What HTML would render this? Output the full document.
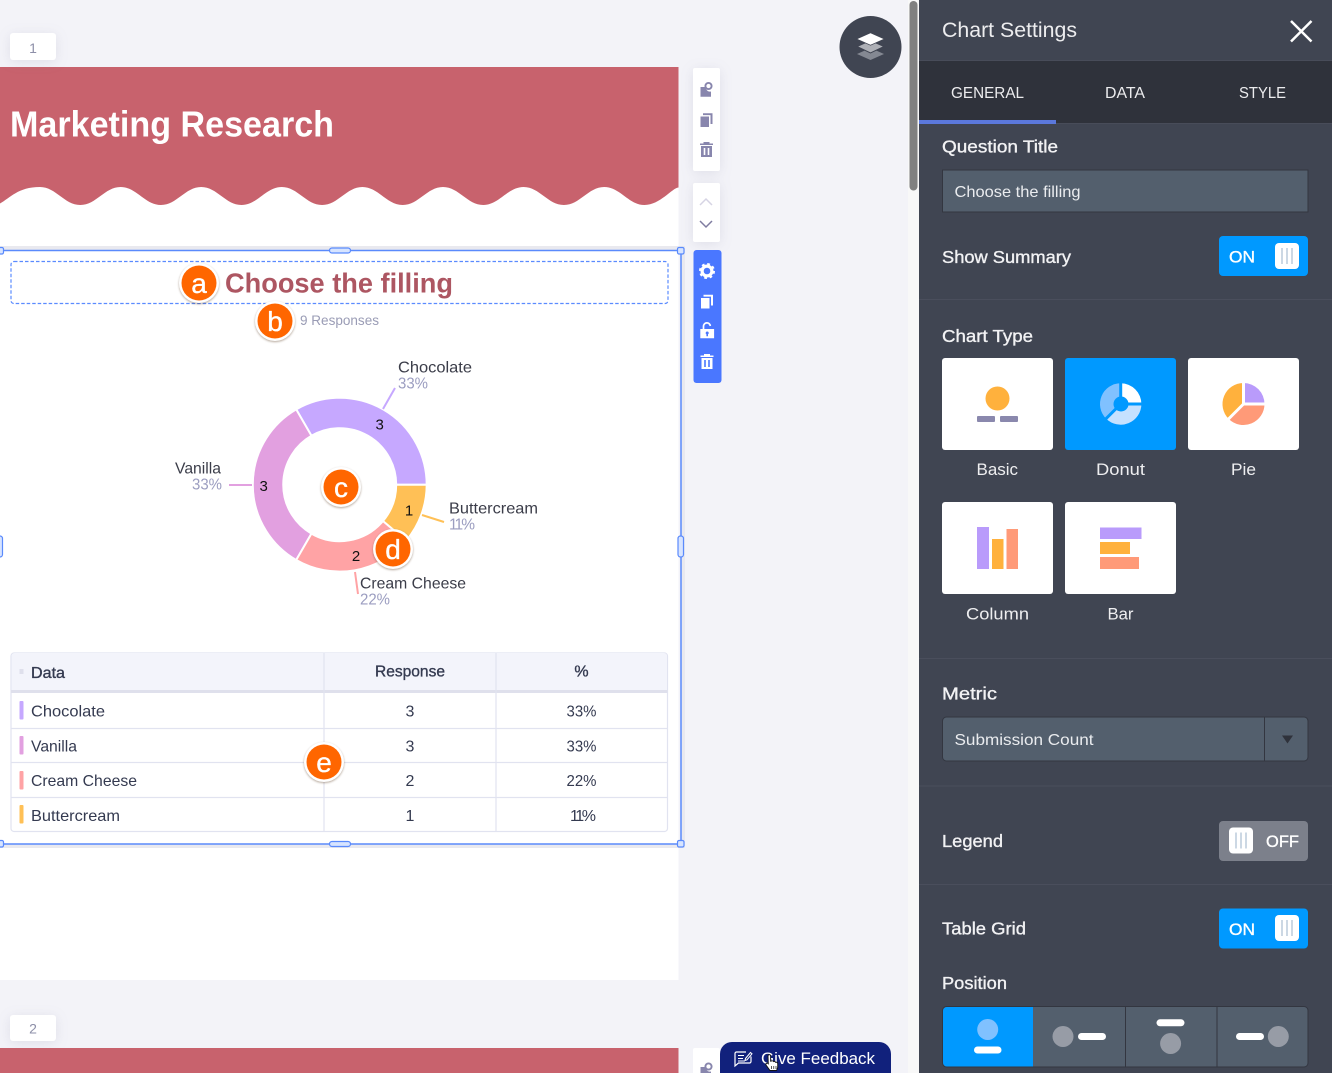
<!DOCTYPE html>
<html><head><meta charset="utf-8"><title>Chart Settings</title>
<style>
html,body{margin:0;padding:0;width:1332px;height:1073px;overflow:hidden;background:#f3f3f8}
svg{display:block;font-family:"Liberation Sans",sans-serif}
.m{stroke:currentColor;stroke-width:.35px}
.sh{filter:drop-shadow(0 2px 6px rgba(90,90,130,.13))}
.bd{filter:drop-shadow(0 1px 1px rgba(90,60,30,.45))}
</style></head><body>
<svg width="1332" height="1073" viewBox="0 0 1332 1073" xmlns="http://www.w3.org/2000/svg">
<defs>
<g id="trash"><path fill-rule="evenodd" d="M-3-7.5h6v1.5h3.5v1.5h-13v-1.5h3.5z M-5.5-3.5h11v11h-11z M-2.8-1.5v7h1.6v-7z M1.2-1.5v7h1.6v-7z"/></g>
<g id="copy"><path d="M-6-3.5h8.5v10.5h-8.5z"/><path d="M-3.5-6.7h9.5v10.7h-2v-8.9h-7.5z"/></g>
<g id="knob"><rect x="-12" y="-13" width="24" height="26" rx="4" fill="#fff"/><path d="M-5-8v16M0-8v16M5-8v16" stroke="#bccbdb" stroke-width="1.5"/></g>
</defs>
<rect width="1332" height="1073" fill="#f3f3f8"/>

<!-- page 1 -->
<rect x="0" y="67" width="678.5" height="913" fill="#fff"/>
<path fill="#c8626d" d="M0 67H678.5V187.5L678.5 187.5C672 188 660 205 644.5 205c-16 0-24.300-18-40.300-18s-24.300 18-40.300 18-24.300-18-40.300-18-24.300 18-40.300 18-24.300-18-40.300-18-24.300 18-40.300 18-24.300-18-40.300-18-24.300 18-40.300 18-24.300-18-40.300-18-24.300 18-40.300 18-24.300-18-40.300-18-24.300 18-40.300 18-24.300-18-40.300-18-24.300 18-40.300 18-24.300-18-40.300-18C18 187 10 198 0 203.500z"/>
<g class="sh"><rect x="10" y="33" width="46" height="27" rx="3" fill="#fff"/></g>
<text x="33" y="53" font-size="14" fill="#8d8fa8" text-anchor="middle">1</text>
<text x="10" y="136.500" font-size="36" font-weight="700" fill="#fff" textLength="324" lengthAdjust="spacingAndGlyphs">Marketing Research</text>

<!-- selection -->
<path d="M0 248h683v598H0" fill="none" stroke="#e9e9ef" stroke-width="4"/>
<path d="M0 250.500H681V844H0" fill="none" stroke="#5a8afc" stroke-width="1.500"/>
<g fill="#d7e4ff" stroke="#5a8afc" stroke-width="1.200">
<rect x="329.500" y="248" width="21" height="5" rx="2.500"/>
<rect x="329.500" y="841.500" width="21" height="5" rx="2.500"/>
<rect x="678" y="536" width="5.500" height="21" rx="2.500"/>
<rect x="-3" y="536" width="5.500" height="21" rx="2.500"/>
<rect x="677.500" y="247.500" width="6.500" height="6.500" rx="1.500"/>
<rect x="677.500" y="840.500" width="6.500" height="6.500" rx="1.500"/>
<rect x="-3" y="247.500" width="6.500" height="6.500" rx="1.500"/>
<rect x="-3" y="840.500" width="6.500" height="6.500" rx="1.500"/>
</g>
<rect x="11" y="261.500" width="657" height="42" rx="3" fill="none" stroke="#5b8bff" stroke-width="1.200" stroke-dasharray="3.500 2"/>
<text x="225" y="292.500" font-size="28" font-weight="700" fill="#ad5662" textLength="228" lengthAdjust="spacingAndGlyphs">Choose the filling</text>
<text x="300" y="325" font-size="14" fill="#9a9cb5" textLength="79" lengthAdjust="spacingAndGlyphs">9 Responses</text>

<!-- donut -->
<g stroke="#fff" stroke-width="2">
<path fill="#c6a8ff" d="M426.700 484.700A87 87 0 0 0 296.200 409.400L311.450 435.800A56.500 56.500 0 0 1 396.200 484.700Z"/>
<path fill="#e2a0e0" d="M296.200 409.400A87 87 0 0 0 296.200 560L311.450 533.600A56.500 56.500 0 0 1 311.450 435.800Z"/>
<path fill="#ffa3a5" d="M296.200 560A87 87 0 0 0 406.300 540.600L383 521A56.500 56.500 0 0 1 311.450 533.600Z"/>
<path fill="#ffc056" d="M406.300 540.600A87 87 0 0 0 426.700 484.700L396.200 484.700A56.500 56.500 0 0 1 383 521Z"/>
</g>
<g stroke-width="2" fill="none">
<path d="M383 409L395 388" stroke="#c6a8ff"/>
<path d="M229 485H252" stroke="#e2a0e0"/>
<path d="M422 515L444 522" stroke="#ffc056"/>
<path d="M355 572L358 594" stroke="#ffa3a5"/>
</g>
<g font-size="15" fill="#111" text-anchor="middle">
<text x="379.700" y="429.500">3</text><text x="263.700" y="491">3</text><text x="409" y="515.500">1</text><text x="356" y="561">2</text>
</g>
<g font-size="16" fill="#3b3d49">
<text x="398" y="372.500" textLength="74" lengthAdjust="spacingAndGlyphs">Chocolate</text>
<text x="175" y="473.500" textLength="46" lengthAdjust="spacingAndGlyphs">Vanilla</text>
<text x="449" y="513.500" textLength="89" lengthAdjust="spacingAndGlyphs">Buttercream</text>
<text x="360" y="588.500" textLength="106" lengthAdjust="spacingAndGlyphs">Cream Cheese</text>
</g>
<g font-size="15.500" fill="#9b9dc0">
<text x="398" y="388.500" textLength="30" lengthAdjust="spacingAndGlyphs">33%</text>
<text x="192" y="489.500" textLength="30" lengthAdjust="spacingAndGlyphs">33%</text>
<text x="449" y="529.500" textLength="24" lengthAdjust="spacing" letter-spacing="-2">11%</text>
<text x="360" y="604.500" textLength="30" lengthAdjust="spacingAndGlyphs">22%</text>
</g>

<!-- table -->
<rect x="11" y="653" width="656.500" height="178.500" rx="3" fill="#fff" stroke="#e1e3f0" stroke-width="1.200"/>
<path d="M11.500 690V656a3 3 0 0 1 3-3H664a3 3 0 0 1 3 3V690Z" fill="#f3f4fb"/>
<rect x="11" y="690" width="656.500" height="3" fill="#dfe0ec"/>
<path d="M11 728.500H667M11 762.500H667M11 797.500H667M324 653V831M496 653V831" stroke="#e1e3f0" stroke-width="1.200" fill="none"/>
<rect x="19.500" y="669" width="4" height="5" fill="#dfe0ec"/>
<rect x="19.500" y="701" width="4" height="18.500" rx="1" fill="#c6a8ff"/>
<rect x="19.500" y="736" width="4" height="18.500" rx="1" fill="#e2a0e0"/>
<rect x="19.500" y="771" width="4" height="18.500" rx="1" fill="#ffa3a5"/>
<rect x="19.500" y="805" width="4" height="18.500" rx="1" fill="#ffc056"/>
<g font-size="16" fill="#343a50" color="#343a50">
<text class="m" x="31" y="678" textLength="34" lengthAdjust="spacingAndGlyphs">Data</text>
<text class="m" x="375" y="676.500" textLength="70" lengthAdjust="spacingAndGlyphs">Response</text>
<text class="m" x="581.500" y="676.500" text-anchor="middle">%</text>
<text x="31" y="716.500" textLength="74" lengthAdjust="spacingAndGlyphs">Chocolate</text>
<text x="31" y="751.500" textLength="46" lengthAdjust="spacingAndGlyphs">Vanilla</text>
<text x="31" y="786" textLength="106" lengthAdjust="spacingAndGlyphs">Cream Cheese</text>
<text x="31" y="821" textLength="89" lengthAdjust="spacingAndGlyphs">Buttercream</text>
<text x="410" y="716.500" text-anchor="middle">3</text>
<text x="410" y="751.500" text-anchor="middle">3</text>
<text x="410" y="786" text-anchor="middle">2</text>
<text x="410" y="821" text-anchor="middle">1</text>
<text x="566.500" y="716.500" textLength="30" lengthAdjust="spacingAndGlyphs">33%</text>
<text x="566.500" y="751.500" textLength="30" lengthAdjust="spacingAndGlyphs">33%</text>
<text x="566.500" y="786" textLength="30" lengthAdjust="spacingAndGlyphs">22%</text>
<text x="570" y="821" textLength="24" lengthAdjust="spacing" letter-spacing="-2">11%</text>
</g>

<!-- badges -->
<g class="bd"><circle cx="199" cy="283" r="20" fill="#fff"/><circle cx="199" cy="283" r="17.500" fill="#ff6600"/></g>
<g class="bd"><circle cx="275" cy="321" r="20" fill="#fff"/><circle cx="275" cy="321" r="17.500" fill="#ff6600"/></g>
<g class="bd"><circle cx="341" cy="487" r="20" fill="#fff"/><circle cx="341" cy="487" r="17.500" fill="#ff6600"/></g>
<g class="bd"><circle cx="393" cy="549" r="20" fill="#fff"/><circle cx="393" cy="549" r="17.500" fill="#ff6600"/></g>
<g class="bd"><circle cx="324" cy="762" r="20" fill="#fff"/><circle cx="324" cy="762" r="17.500" fill="#ff6600"/></g>
<g font-size="28" fill="#fff" text-anchor="middle" class="m" color="#fff">
<text x="199" y="293">a</text><text x="275" y="331">b</text><text x="341" y="497">c</text><text x="393" y="559">d</text><text x="324" y="772">e</text>
</g>

<!-- toolbars -->
<g class="sh"><rect x="693" y="68" width="27" height="103" rx="2" fill="#fff"/>
<rect x="693" y="183" width="27" height="59" rx="2" fill="#fff"/></g>
<g fill="#8886ad" color="#8886ad">
<path d="M700.500 87h5.500v1.500a4 4 0 0 0 5 3v5.200h-10.500z"/>
<circle cx="708.500" cy="86" r="3.100" fill="none" stroke="#8886ad" stroke-width="1.900"/>
<use href="#copy" x="706.500" y="120"/>
<use href="#trash" x="706.500" y="149.500"/>
</g>
<path d="M700 205l6-6 6 6" fill="none" stroke="#d6d4e4" stroke-width="1.500"/>
<path d="M700 221l6 6 6-6" fill="none" stroke="#7f7ca0" stroke-width="1.500"/>
<rect x="693.500" y="250" width="28" height="133" rx="3" fill="#4a77ff"/>
<g fill="#fff">
<circle cx="707" cy="271" r="4.900" fill="none" stroke="#fff" stroke-width="3.200"/>
<circle cx="707" cy="271" r="7" fill="none" stroke="#fff" stroke-width="2" stroke-dasharray="2.750 2.750"/>
<use href="#copy" x="707" y="301.500"/>
<path fill-rule="evenodd" d="M700.300 329h13.800v9.300h-13.800z M707.200 331.500a1.500 1.500 0 0 0-.8 2.800v2h1.600v-2a1.500 1.500 0 0 0-.8-2.800z"/>
<path d="M703.500 329v-2.500a3.400 3.400 0 0 1 6.800-.5" fill="none" stroke="#fff" stroke-width="1.700"/>
<use href="#trash" x="707" y="361.500"/>
</g>

<!-- layers button -->
<circle cx="870.500" cy="47" r="31" fill="#404552"/>
<path d="M857 54l13.500-6 13.500 6-13.500 6z" fill="#848892"/>
<path d="M857 46.500l13.500-6 13.500 6-13.500 6.500z" fill="#aeb0b6" stroke="#404552" stroke-width="1"/>
<path d="M856.500 39l14-6.200 14 6.200-14 6.200z" fill="#fff" stroke="#404552" stroke-width=".8"/>

<!-- page 2 -->
<g class="sh"><rect x="10" y="1015" width="46" height="26" rx="3" fill="#fff"/></g>
<text x="33" y="1033.500" font-size="14" fill="#8d8fa8" text-anchor="middle">2</text>
<rect x="0" y="1048" width="678.500" height="25" fill="#c8626d"/>
<rect x="693" y="1048" width="27" height="30" rx="2" fill="#fff"/>
<path d="M700.500 1067h5.500v1.500a4 4 0 0 0 5 3v5h-10.500z" fill="#8886ad"/>
<circle cx="708.500" cy="1066.500" r="3.100" fill="none" stroke="#8886ad" stroke-width="1.900"/>

<!-- feedback -->
<path d="M720 1073v-19a12 12 0 0 1 12-12h147a12 12 0 0 1 12 12v19z" fill="#11217c"/>
<path d="M746 1052h-9.500a1.500 1.500 0 0 0-1.500 1.500v12.500l3.500-3h11a1.500 1.500 0 0 0 1.500-1.500v-5" fill="none" stroke="#fff" stroke-width="1.200"/>
<path d="M738 1055.500h6M738 1058.500h5M738 1061h7M745.500 1058.500l5-6 1.500 1.300-5 6-2 .7z" fill="none" stroke="#fff" stroke-width="1"/>
<text x="761" y="1064" font-size="17" fill="#fff" textLength="114" lengthAdjust="spacingAndGlyphs">Give Feedback</text>
<path d="M768 1056c0-1.700 2.600-1.700 2.600 0v5.200l1.200-.3c.9-.2 1.700.2 1.800.7.900-.3 1.700 0 1.900.7 1.100-.3 2.200.2 2.200 1.300v3.700l-1.100 3.200h-6.600l-3.900-5.400c-.9-1.400.9-2.700 2.200-1.400z" fill="#fff" stroke="#111" stroke-width=".9"/>
<path d="M771.500 1066v3M773.800 1066v3M776 1066v3" stroke="#111" stroke-width=".7"/>

<!-- scrollbar -->
<rect x="908" y="0" width="11" height="1073" fill="#f8f8f8"/>
<rect x="909.500" y="1" width="8" height="189.500" rx="4" fill="#808080"/>

<!-- panel -->
<rect x="919" y="0" width="413" height="1073" fill="#404552"/>
<rect x="919" y="60" width="413" height="1" fill="#484c59"/>
<rect x="919" y="61" width="413" height="62" fill="#2f323b"/>
<rect x="919" y="123" width="413" height="1" fill="#484c59"/>
<rect x="919" y="120" width="137" height="4" fill="#5b78dc"/>
<text x="942" y="37" font-size="21" fill="#ededef" textLength="135" lengthAdjust="spacingAndGlyphs">Chart Settings</text>
<path d="M1291 21l20.500 20.500M1311.500 21l-20.500 20.500" stroke="#fff" stroke-width="2.500" fill="none"/>
<g font-size="16" fill="#ececee">
<text x="951" y="98" textLength="73" lengthAdjust="spacingAndGlyphs">GENERAL</text>
<text x="1105" y="98" textLength="40" lengthAdjust="spacingAndGlyphs">DATA</text>
<text x="1239" y="98" textLength="47" lengthAdjust="spacingAndGlyphs">STYLE</text>
</g>
<g font-size="17.500" fill="#f2f2f4" color="#f2f2f4">
<text class="m" x="942" y="152.500" textLength="116" lengthAdjust="spacingAndGlyphs">Question Title</text>
<text class="m" x="942" y="263" textLength="129" lengthAdjust="spacingAndGlyphs">Show Summary</text>
<text class="m" x="942" y="342" textLength="91" lengthAdjust="spacingAndGlyphs">Chart Type</text>
<text class="m" x="942" y="699.500" textLength="55" lengthAdjust="spacingAndGlyphs">Metric</text>
<text class="m" x="942" y="847" textLength="61" lengthAdjust="spacingAndGlyphs">Legend</text>
<text class="m" x="942" y="934.500" textLength="84" lengthAdjust="spacingAndGlyphs">Table Grid</text>
<text class="m" x="942" y="989" textLength="65" lengthAdjust="spacingAndGlyphs">Position</text>
</g>
<rect x="942.500" y="170" width="365.500" height="42" fill="#535f6d" stroke="#333640"/>
<text x="954.500" y="197" font-size="16" fill="#eaecef" textLength="126" lengthAdjust="spacingAndGlyphs">Choose the filling</text>

<rect x="1219" y="236" width="89" height="40" rx="4" fill="#0099ff"/>
<text class="m" x="1229" y="262.500" font-size="17" fill="#fff" color="#fff" textLength="26" lengthAdjust="spacingAndGlyphs">ON</text>
<use href="#knob" x="1287" y="256"/>
<path d="M919 299.500H1332M919 658.500H1332M919 786H1332M919 884.500H1332" stroke="#4a4e5c" stroke-width="1"/>

<!-- chart type cards -->
<rect x="942" y="358" width="111" height="92" rx="3" fill="#fff"/>
<rect x="1065" y="358" width="111" height="92" rx="3" fill="#0099ff"/>
<rect x="1188" y="358" width="111" height="92" rx="3" fill="#fff"/>
<rect x="942" y="502" width="111" height="92" rx="3" fill="#fff"/>
<rect x="1065" y="502" width="111" height="92" rx="3" fill="#fff"/>

<circle cx="997.500" cy="398.500" r="12" fill="#ffb13d"/>
<rect x="977" y="416" width="18" height="6" rx="1" fill="#8a88ad"/>
<rect x="1000" y="416" width="18" height="6" rx="1" fill="#8a88ad"/>

<path d="M1120.700 404V383.300A20.700 20.700 0 0 1 1141.400 404Z" fill="#fff"/>
<path d="M1120.700 404H1141.400A20.700 20.700 0 0 1 1106.060 418.640Z" fill="#c5e1ff"/>
<path d="M1120.700 404L1106.060 418.640A20.700 20.700 0 0 1 1120.700 383.300Z" fill="#80c1ff"/>
<path d="M1120.700 404V380M1120.700 404H1144M1120.700 404L1104 420.700" stroke="#0099ff" stroke-width="3" fill="none"/>
<circle cx="1121" cy="404" r="7.500" fill="#0099ff"/>

<path d="M1243.500 404V383A21 21 0 0 1 1264.500 404Z" fill="#b99bfb"/>
<path d="M1243.500 404H1264.500A21 21 0 0 1 1228.650 418.850Z" fill="#ff9a78"/>
<path d="M1243.500 404L1228.650 418.850A21 21 0 0 1 1243.500 383Z" fill="#ffb13d"/>
<path d="M1243.500 404V380M1243.500 404H1267M1243.500 404L1226 421.500" stroke="#fff" stroke-width="3" fill="none"/>

<rect x="977" y="527" width="12" height="42" fill="#b99bfb"/>
<rect x="992" y="539" width="11.500" height="30" fill="#ffb13d"/>
<rect x="1006.500" y="529" width="11.500" height="40" fill="#ff9a78"/>
<rect x="1100" y="527.500" width="41.500" height="11.500" fill="#b99bfb"/>
<rect x="1100" y="542" width="30" height="12" fill="#ffb13d"/>
<rect x="1100" y="557" width="39" height="12" fill="#ff9a78"/>

<g font-size="17" fill="#eeeef0">
<text x="976.500" y="475" textLength="41.500" lengthAdjust="spacingAndGlyphs">Basic</text>
<text x="1096" y="475" textLength="49" lengthAdjust="spacingAndGlyphs">Donut</text>
<text x="1231" y="475" textLength="25" lengthAdjust="spacingAndGlyphs">Pie</text>
<text x="966" y="619.500" textLength="63" lengthAdjust="spacingAndGlyphs">Column</text>
<text x="1107.500" y="619.500" textLength="26" lengthAdjust="spacingAndGlyphs">Bar</text>
</g>

<!-- metric -->
<rect x="942.500" y="717" width="365.500" height="44" rx="4" fill="#535f6d" stroke="#333640"/>
<path d="M1264.500 717V761" stroke="#333640"/>
<text x="954.500" y="745" font-size="16" fill="#eaecef" textLength="139" lengthAdjust="spacingAndGlyphs">Submission Count</text>
<path d="M1282 735.500h11l-5.500 8z" fill="#2f323b"/>

<!-- toggles -->
<rect x="1219" y="821" width="89" height="40" rx="4" fill="#7c808b"/>
<use href="#knob" x="1241" y="840.500"/>
<text class="m" x="1266" y="847" font-size="17" fill="#fff" color="#fff" textLength="33" lengthAdjust="spacingAndGlyphs">OFF</text>
<rect x="1219" y="908.500" width="89" height="40" rx="4" fill="#0099ff"/>
<text class="m" x="1229" y="935" font-size="17" fill="#fff" color="#fff" textLength="26" lengthAdjust="spacingAndGlyphs">ON</text>
<use href="#knob" x="1287" y="928"/>

<!-- position -->
<rect x="942.500" y="1006.500" width="365.500" height="60.500" rx="4" fill="#535f6d" stroke="#333640"/>
<path d="M1033 1007V1066.500H947a4 4 0 0 1-4-4V1011a4 4 0 0 1 4-4z" fill="#0099ff"/>
<path d="M1125.500 1007V1067M1217 1007V1067" stroke="#333640"/>
<circle cx="987.700" cy="1029.500" r="10.500" fill="#80c1ff"/>
<rect x="974" y="1046.500" width="27.500" height="7" rx="3.500" fill="#fff"/>
<circle cx="1063" cy="1036.500" r="10.500" fill="#979ca6"/>
<rect x="1078" y="1033" width="28" height="7" rx="3.500" fill="#fff"/>
<rect x="1156.500" y="1019.300" width="28" height="7" rx="3.500" fill="#fff"/>
<circle cx="1170.600" cy="1043.500" r="10.500" fill="#979ca6"/>
<rect x="1236" y="1033" width="28" height="7" rx="3.500" fill="#fff"/>
<circle cx="1278.300" cy="1036.500" r="10.500" fill="#979ca6"/>
</svg>
</body></html>
